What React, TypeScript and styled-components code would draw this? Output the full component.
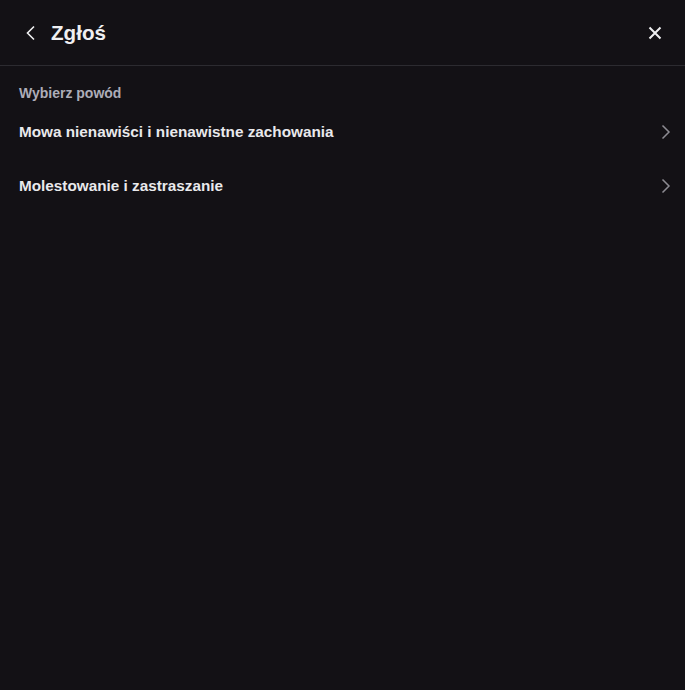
import React from "react";
import styled, { createGlobalStyle } from "styled-components";

const Global = createGlobalStyle`
  html, body { margin: 0; padding: 0; background: #131115; }
  body { font-family: "Liberation Sans", Arial, sans-serif; }
  #root { min-height: 690px; }
`;

const Page = styled.div`
  width: 685px;
  height: 690px;
  background: #131115;
  display: flex;
  flex-direction: column;
  color: #efeff1;
`;

const Header = styled.header`
  height: 66px;
  box-sizing: border-box;
  border-bottom: 1px solid #2c2b30;
  display: flex;
  align-items: center;
  padding: 0 18px 0 19px;
  gap: 8px;
`;

const IconButton = styled.button`
  width: 24px;
  height: 24px;
  padding: 0;
  border: none;
  background: transparent;
  color: #efeff1;
  display: flex;
  align-items: center;
  justify-content: center;
  cursor: pointer;
`;

const Title = styled.h1`
  margin: 0;
  font-size: 20.6px;
  font-weight: 700;
  flex: 1;
  color: #efeff1;
`;

const Body = styled.div`
  display: flex;
  flex-direction: column;
  padding: 19px 10px 0 19px;
`;

const SectionLabel = styled.div`
  font-size: 14px;
  font-weight: 700;
  color: #adadb8;
  line-height: 17px;
  margin-bottom: 3px;
`;

const Item = styled.button`
  display: flex;
  align-items: center;
  justify-content: space-between;
  height: 54px;
  padding: 0;
  border: none;
  background: transparent;
  color: #e9e9ec;
  font-family: inherit;
  font-size: 15.3px;
  font-weight: 700;
  text-align: left;
  cursor: pointer;
`;

const Chevron = styled.span`
  color: #8d8c93;
  display: flex;
`;

const BackIcon = () => (
  <svg width="20" height="20" viewBox="0 0 20 20" fill="none">
    <path d="M13 3.5 6.5 10 13 16.5" stroke="currentColor" strokeWidth="1.6" />
  </svg>
);

const CloseIcon = () => (
  <svg width="20" height="20" viewBox="0 0 20 20" fill="none">
    <path d="M4.5 4.5l11 11M15.5 4.5l-11 11" stroke="currentColor" strokeWidth="2" />
  </svg>
);

const ChevronRight = () => (
  <svg width="20" height="20" viewBox="0 0 20 20" fill="none">
    <path d="M7.5 3.5 14 10l-6.5 6.5" stroke="currentColor" strokeWidth="1.5" />
  </svg>
);

const reasons = [
  "Mowa nienawiści i nienawistne zachowania",
  "Molestowanie i zastraszanie",
];

export default function App() {
  return (
    <>
      <Global />
      <Page>
        <Header>
          <IconButton aria-label="Wstecz">
            <BackIcon />
          </IconButton>
          <Title>Zgłoś</Title>
          <IconButton aria-label="Zamknij">
            <CloseIcon />
          </IconButton>
        </Header>
        <Body>
          <SectionLabel>Wybierz powód</SectionLabel>
          {reasons.map((r) => (
            <Item key={r}>
              <span>{r}</span>
              <Chevron>
                <ChevronRight />
              </Chevron>
            </Item>
          ))}
        </Body>
      </Page>
    </>
  );
}
